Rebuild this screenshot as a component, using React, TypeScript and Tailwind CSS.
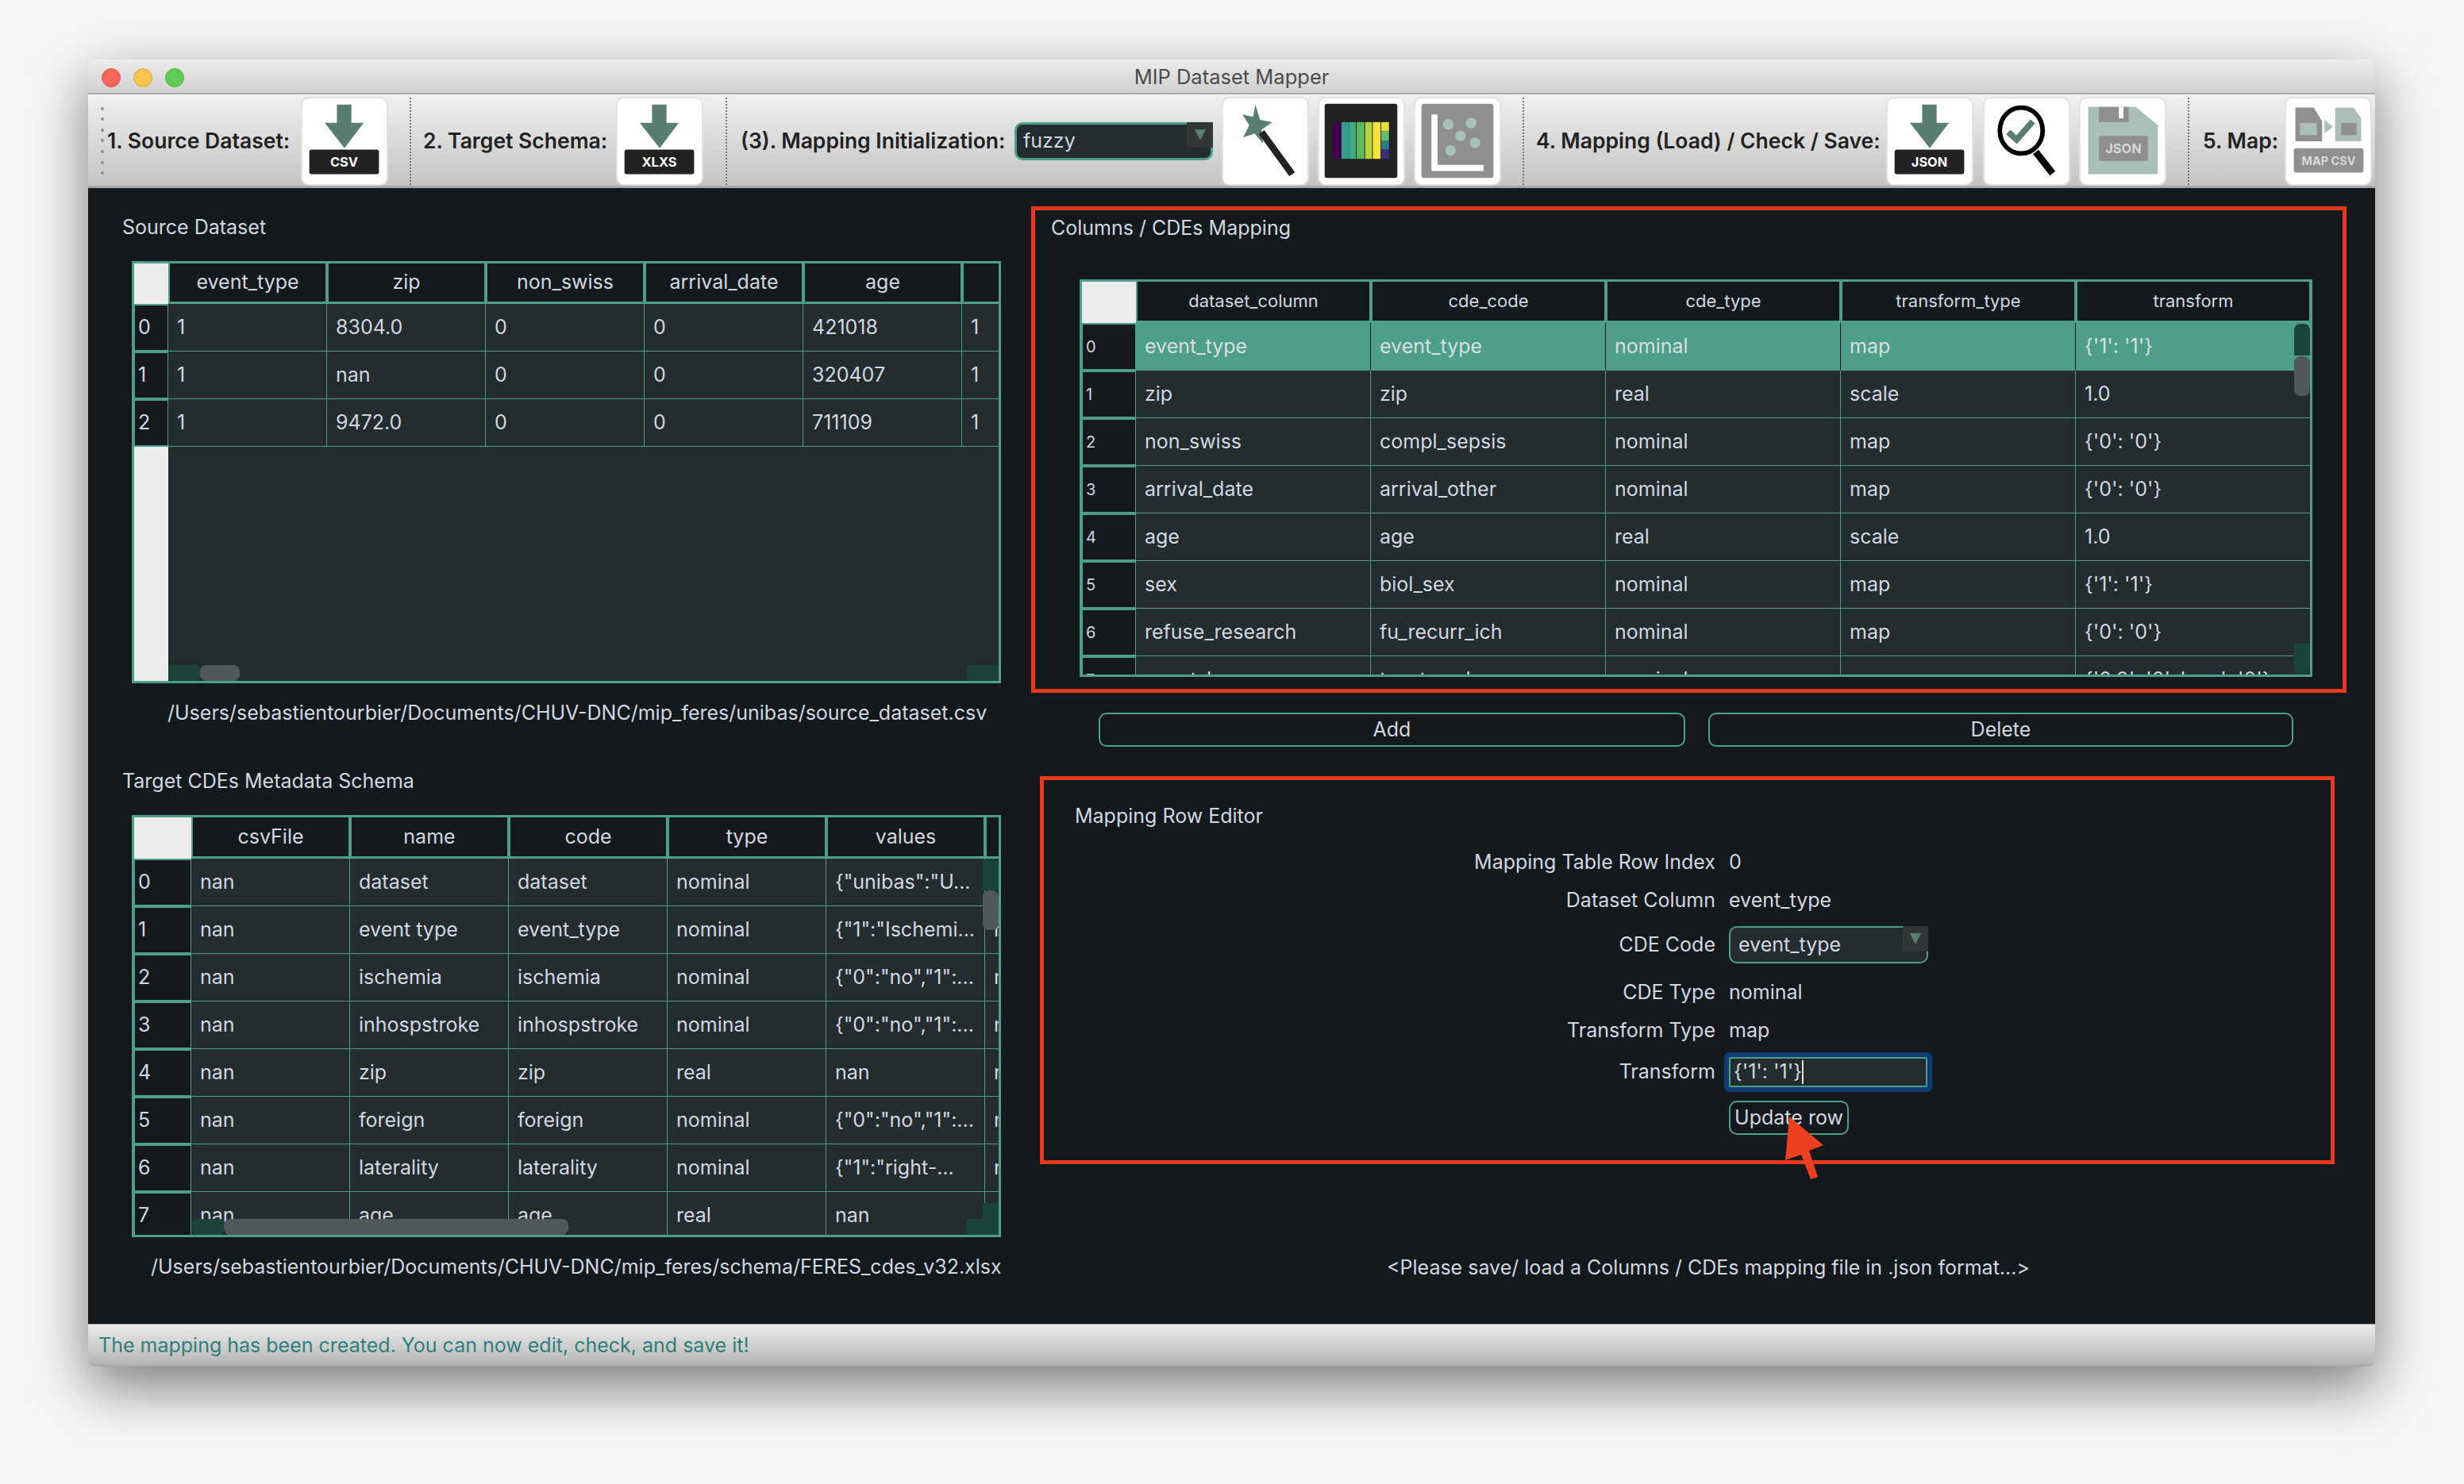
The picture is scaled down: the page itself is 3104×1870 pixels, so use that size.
import React from "react";

function Bar({ className }: { className: string }) {
  return <div className={"absolute " + className} />;
}

type TableProps = {
  width: string;
  height: string;
  headH: string;
  rowHeadW: string;
  cellW: string;
  headFont: string;
  rowHeadFont: string;
  headers: string[];
  rows: string[][];
  selected?: number;
  children?: React.ReactNode;
};

function DataTable({ width, height, headH, rowHeadW, cellW, headFont, rowHeadFont, headers, rows, selected, children }: TableProps) {
  return (
    <div className={`relative flex flex-col shrink-0 overflow-hidden border-[3px] border-[#4e9f89] bg-[#232c2f] ${width} ${height}`}>
      <div className={`flex shrink-0 bg-[#4e9f89] ${headH}`}>
        <div className={`shrink-0 bg-[#ececec] ${rowHeadW}`} />
        {headers.map((h, i) => (
          <div key={i} className={`flex shrink-0 items-center justify-center border-x-2 border-b-[3px] border-[#4e9f89] bg-[#14191d] text-[#d3d7e0] ${cellW} ${headFont}`}>
            {h}
          </div>
        ))}
      </div>
      <div className="flex min-h-0 flex-1">
        <div className={`flex shrink-0 flex-col bg-[#ececec] ${rowHeadW}`}>
          {rows.map((_, i) => (
            <div key={i} className={`flex h-[60px] shrink-0 items-center border-x-[1px] border-y-2 border-[#4e9f89] bg-[#14191d] pl-[4px] text-[#d3d7e0] ${rowHeadFont}`}>
              {i}
            </div>
          ))}
        </div>
        <div className="flex flex-col">
          {rows.map((r, i) => (
            <div key={i} className={`flex h-[60px] shrink-0 ${selected === i ? "bg-[#4e9f89]" : ""}`}>
              {r.map((c, j) => (
                <div
                  key={j}
                  className={`flex shrink-0 items-center overflow-hidden whitespace-nowrap pl-[11px] text-[25px] ${cellW} ${selected === i ? "border-r border-[#14191d] text-[#d7dfdf]" : "border-r border-b border-[#4e9f89] text-[#d3d7e0]"}`}
                >
                  {c}
                </div>
              ))}
            </div>
          ))}
        </div>
      </div>
      {children}
    </div>
  );
}

function Sep() {
  return <div className="h-[110px] w-0 shrink-0 border-l-2 border-dotted border-[#777]" />;
}

function ToolLabel({ children, className }: { children: React.ReactNode; className: string }) {
  return <span className={`shrink-0 whitespace-nowrap text-[26.5px] font-semibold text-[#222] ${className}`}>{children}</span>;
}

function IconBtn({ className, children }: { className: string; children: React.ReactNode }) {
  return (
    <div className={`h-[112px] w-[110px] shrink-0 overflow-hidden rounded-[10px] border-2 border-[#e2e2e2] bg-white ${className}`}>
      <svg viewBox="0 0 110 112" className="h-full w-full">
        {children}
      </svg>
    </div>
  );
}

function DownloadIcon({ label, size }: { label: string; size: number }) {
  return (
    <>
      <path d="M45 8h19v24h16L55 65 29 32h16z" fill="#587e71" />
      <rect x="9" y="67" width="91" height="32" rx="3" fill="#222" />
      <text x="54.5" y="89" textAnchor="middle" fill="#fff" fontSize={size} fontWeight="700" fontFamily="Inter, sans-serif">
        {label}
      </text>
    </>
  );
}

const srcHeaders = ["event_type", "zip", "non_swiss", "arrival_date", "age", ""];
const srcRows = [
  ["1", "8304.0", "0", "0", "421018", "1"],
  ["1", "nan", "0", "0", "320407", "1"],
  ["1", "9472.0", "0", "0", "711109", "1"],
];
const tgtHeaders = ["csvFile", "name", "code", "type", "values", ""];
const tgtRows = [
  ["nan", "dataset", "dataset", "nominal", '{"unibas":"U...', "nan"],
  ["nan", "event type", "event_type", "nominal", '{"1":"Ischemi...', "nan"],
  ["nan", "ischemia", "ischemia", "nominal", '{"0":"no","1":...', "nan"],
  ["nan", "inhospstroke", "inhospstroke", "nominal", '{"0":"no","1":...', "nan"],
  ["nan", "zip", "zip", "real", "nan", "nan"],
  ["nan", "foreign", "foreign", "nominal", '{"0":"no","1":...', "nan"],
  ["nan", "laterality", "laterality", "nominal", '{"1":"right-...', "nan"],
  ["nan", "age", "age", "real", "nan", "nan"],
];
const mapHeaders = ["dataset_column", "cde_code", "cde_type", "transform_type", "transform"];
const mapRows = [
  ["event_type", "event_type", "nominal", "map", "{'1': '1'}"],
  ["zip", "zip", "real", "scale", "1.0"],
  ["non_swiss", "compl_sepsis", "nominal", "map", "{'0': '0'}"],
  ["arrival_date", "arrival_other", "nominal", "map", "{'0': '0'}"],
  ["age", "age", "real", "scale", "1.0"],
  ["sex", "biol_sex", "nominal", "map", "{'1': '1'}"],
  ["refuse_research", "fu_recurr_ich", "nominal", "map", "{'0': '0'}"],
  ["onset_known", "toast_endoc", "nominal", "map", "{'0.0': '0', 'nan': '0'}"],
];

function FormRow({ label, h, mt, children }: { label: string; h: string; mt: string; children: React.ReactNode }) {
  return (
    <div className={`flex items-center ${h} ${mt}`}>
      <div className="w-[846px] shrink-0 text-right text-[25px] text-[#d3d7e0]">{label}</div>
      <div className="ml-[17px] flex items-center text-[25px] text-[#d3d7e0]">{children}</div>
    </div>
  );
}

function ComboArrow({ className }: { className: string }) {
  return (
    <div className={`absolute flex items-center justify-center bg-[#333636] ${className}`}>
      <svg viewBox="0 0 16 16" className="h-[16px] w-[16px]">
        <path d="M1 1h14L8 15z" fill="#587e71" />
      </svg>
    </div>
  );
}

export default function App() {
  return (
    <div className="h-[1870px] w-[3104px] overflow-hidden bg-[#f6f6f6] pl-[111px] pt-[75px] [font-family:Inter,sans-serif]">
      <div className="flex h-[1647px] w-[2881px] flex-col overflow-hidden rounded-t-[12px] rounded-b-[8px] shadow-[0_25px_70px_rgba(0,0,0,0.5)]">
        {/* title bar */}
        <div className="relative flex h-[44px] shrink-0 items-center justify-center border-b-2 border-[#adadad] bg-gradient-to-b from-[#ececec] to-[#d0d0d0] pt-[3px]">
          <div className="absolute left-[17px] top-[11px] flex gap-[16px]">
            <div className="h-[24px] w-[24px] rounded-full border border-[#d9544c] bg-[#f4665c]" />
            <div className="h-[24px] w-[24px] rounded-full border border-[#d9a23a] bg-[#f8c34f]" />
            <div className="h-[24px] w-[24px] rounded-full border border-[#4fae44] bg-[#5fca54]" />
          </div>
          <span className="text-[25.5px] text-[#4a4a4a]">MIP Dataset Mapper</span>
        </div>

        {/* toolbar */}
        <div className="flex h-[118px] shrink-0 items-center border-b-[3px] border-[#a8a8a8] bg-gradient-to-b from-[#f0f0f0] to-[#c4c4c4] pt-[2px]">
          <div className="ml-[16px] flex h-[90px] w-[8px] shrink-0 flex-col justify-between py-[2px]">
            {[0, 1, 2, 3, 4, 5, 6].map((i) => (
              <div key={i} className="h-[4px] w-[4px] rounded-full bg-[#8d8d8d]" />
            ))}
          </div>
          <ToolLabel className="w-[232px]">1. Source Dataset:</ToolLabel>
          <IconBtn className="ml-[12px]">
            <DownloadIcon label="CSV" size={17} />
          </IconBtn>
          <div className="ml-[27px]"><Sep /></div>
          <ToolLabel className="ml-[15px] w-[231px]">2. Target Schema:</ToolLabel>
          <IconBtn className="ml-[12px]">
            <DownloadIcon label="XLXS" size={17} />
          </IconBtn>
          <div className="ml-[28px]"><Sep /></div>
          <ToolLabel className="ml-[17px] w-[333px]">(3). Mapping Initialization:</ToolLabel>
          <div className="relative ml-[12px] flex h-[48px] w-[250px] shrink-0 items-center rounded-[10px] border-[3px] border-[#4e9f89] bg-[#232c2f] pl-[8px] text-[25px] text-[#d3d7e0]">
            fuzzy
            <ComboArrow className="right-[-3px] top-[-3px] h-[32px] w-[33px]" />
          </div>
          <IconBtn className="ml-[11px]">
            <path d="M42 8l6 20 16 3-14 10 2 18-11-13-15 5 8-16-9-14 14 3z" fill="#587e71" />
            <path d="M50 44l40 55" stroke="#222" strokeWidth="9" />
          </IconBtn>
          <IconBtn className="ml-[11px]">
            <rect x="7" y="7" width="95" height="97" rx="3" fill="#222" />
            <rect x="18" y="31" width="10" height="48" fill="#440154" />
            <rect x="29" y="31" width="10" height="48" fill="#35a08b" />
            <rect x="39" y="31" width="9" height="48" fill="#3fa886" />
            <rect x="49" y="31" width="10" height="48" fill="#5cb85c" />
            <rect x="60" y="31" width="9" height="48" fill="#b5d43c" />
            <rect x="70" y="31" width="10" height="48" fill="#f5e23a" />
            <rect x="81" y="31" width="10" height="12" fill="#e8e03a" />
            <rect x="81" y="43" width="10" height="12" fill="#5fbf6a" />
            <rect x="81" y="55" width="10" height="12" fill="#2c7c8e" />
            <rect x="81" y="67" width="10" height="12" fill="#3a2f7f" />
          </IconBtn>
          <IconBtn className="ml-[11px]">
            <rect x="8" y="7" width="94" height="97" rx="3" fill="#8f8f8f" />
            <path d="M21 21h8v66h60v8H21z" fill="#fff" />
            <ellipse cx="43" cy="34" rx="7" ry="7" fill="#a7c0b8" />
            <ellipse cx="73" cy="32" rx="7" ry="7" fill="#a7c0b8" />
            <ellipse cx="59" cy="49" rx="7" ry="7" fill="#a7c0b8" />
            <ellipse cx="78" cy="58" rx="7" ry="7" fill="#a7c0b8" />
            <ellipse cx="46" cy="68" rx="7" ry="7" fill="#a7c0b8" />
          </IconBtn>
          <div className="ml-[27px]"><Sep /></div>
          <ToolLabel className="ml-[15px] w-[428px]">4. Mapping (Load) / Check / Save:</ToolLabel>
          <IconBtn className="ml-[13px]">
            <DownloadIcon label="JSON" size={17} />
          </IconBtn>
          <IconBtn className="ml-[12px]">
            <ellipse cx="48" cy="42" rx="28" ry="30" fill="none" stroke="#000" strokeWidth="6" />
            <path d="M31 44l11 10 21-24" fill="none" stroke="#587e71" strokeWidth="8" />
            <path d="M67 70l22 28" stroke="#000" strokeWidth="9" />
          </IconBtn>
          <IconBtn className="ml-[11px]">
            <path d="M10 11h62l29 24v64H10z" fill="#a9bfb8" />
            <rect x="24" y="11" width="39" height="20" fill="#8f8f8f" />
            <rect x="50" y="11" width="6" height="15" fill="#fff" />
            <rect x="24" y="49" width="64" height="33" rx="3" fill="#8f8f8f" />
            <text x="56" y="72" textAnchor="middle" fill="#d9d9d9" fontSize="17" fontWeight="700" fontFamily="Inter, sans-serif">JSON</text>
          </IconBtn>
          <div className="ml-[27px]"><Sep /></div>
          <ToolLabel className="ml-[17px] w-[93px]">5. Map:</ToolLabel>
          <IconBtn className="ml-[10px]">
            <path d="M12 12h24l11 18v26H12z" fill="#8f8f8f" />
            <rect x="18" y="32" width="22" height="16" fill="#a9bfb8" />
            <path d="M50 28l11 9-11 9z" fill="#a9bfb8" />
            <path d="M64 12h24l10 14v30H64z" fill="#a9bfb8" />
            <rect x="72" y="32" width="20" height="16" fill="#8f8f8f" />
            <rect x="10" y="65" width="91" height="32" rx="3" fill="#8f8f8f" />
            <text x="55.5" y="87" textAnchor="middle" fill="#d9d9d9" fontSize="15" fontWeight="700" fontFamily="Inter, sans-serif">MAP CSV</text>
          </IconBtn>
        </div>

        {/* main */}
        <div className="flex h-[1431px] shrink-0 bg-[#14191d]">
          {/* left column */}
          <div className="flex w-[1188px] shrink-0 flex-col text-[25px] text-[#d3d7e0]">
            <div className="ml-[43px] mt-[30px] flex h-[40px] items-center">Source Dataset</div>
            <div className="ml-[55px] mt-[22px]">
              <DataTable
                width="w-[1095px]"
                height="h-[532px]"
                headH="h-[51px]"
                rowHeadW="w-[43px]"
                cellW="w-[200px]"
                headFont="text-[25px]"
                rowHeadFont="text-[25px]"
                headers={srcHeaders}
                rows={srcRows}
              >
                <Bar className="bottom-0 left-[43px] h-[20px] w-[40px] rounded-[5px] bg-[#1a4439]" />
                <Bar className="bottom-0 left-[83px] h-[20px] w-[50px] rounded-[8px] bg-[#50585b]" />
                <Bar className="bottom-0 right-0 h-[20px] w-[40px] rounded-[5px] bg-[#1a4439]" />
              </DataTable>
            </div>
            <div className="ml-[100px] mt-[18px] flex h-[40px] items-center whitespace-nowrap">
              /Users/sebastientourbier/Documents/CHUV-DNC/mip_feres/unibas/source_dataset.csv
            </div>
            <div className="ml-[43px] mt-[46px] flex h-[40px] items-center">Target CDEs Metadata Schema</div>
            <div className="ml-[55px] mt-[22px]">
              <DataTable
                width="w-[1095px]"
                height="h-[532px]"
                headH="h-[52px]"
                rowHeadW="w-[72px]"
                cellW="w-[200px]"
                headFont="text-[25px]"
                rowHeadFont="text-[25px]"
                headers={tgtHeaders}
                rows={tgtRows}
              >
                <Bar className="right-0 top-[52px] h-[40px] w-[20px] rounded-t-[6px] bg-[#1a4439]" />
                <Bar className="right-0 top-[92px] h-[50px] w-[20px] rounded-[8px] bg-[#50585b]" />
                <Bar className="bottom-0 right-0 h-[40px] w-[20px] bg-[#1a4439]" />
                <Bar className="bottom-0 left-[73px] h-[20px] w-[40px] rounded-[5px] bg-[#1a4439]" />
                <Bar className="bottom-0 left-[113px] h-[20px] w-[434px] rounded-[8px] bg-[#50585b]" />
                <Bar className="bottom-0 right-0 h-[20px] w-[40px] bg-[#1a4439]" />
              </DataTable>
            </div>
            <div className="ml-[79px] mt-[18px] flex h-[40px] w-[1071px] items-center overflow-hidden whitespace-nowrap">
              /Users/sebastientourbier/Documents/CHUV-DNC/mip_feres/schema/FERES_cdes_v32.xlsx
            </div>
          </div>

          {/* right column */}
          <div className="flex w-[1693px] shrink-0 flex-col text-[25px] text-[#d3d7e0]">
            <div className="mt-[23px] flex h-[613px] w-[1657px] flex-col border-[5px] border-[#e8391d]">
              <div className="ml-[20px] mt-[-1px] flex h-[48px] items-center">Columns / CDEs Mapping</div>
              <div className="ml-[56px] mt-[40px]">
                <DataTable
                  width="w-[1553px]"
                  height="h-[501px]"
                  headH="h-[52px]"
                  rowHeadW="w-[68px]"
                  cellW="w-[296px]"
                  headFont="text-[22px]"
                  rowHeadFont="text-[20px]"
                  headers={mapHeaders}
                  rows={mapRows}
                  selected={0}
                >
                  <Bar className="right-0 top-[53px] h-[40px] w-[20px] rounded-t-[8px] bg-[#1a4439]" />
                  <Bar className="right-0 top-[94px] h-[50px] w-[20px] rounded-[8px] bg-[#50585b]" />
                  <Bar className="bottom-0 right-0 h-[39px] w-[20px] rounded-b-[6px] bg-[#1a4439]" />
                </DataTable>
              </div>
            </div>
            <div className="mt-[25px] flex">
              <div className="ml-[85px] flex h-[43px] w-[739px] items-center justify-center rounded-[10px] border-2 border-[#4e9f89]">Add</div>
              <div className="ml-[29px] flex h-[43px] w-[737px] items-center justify-center rounded-[10px] border-2 border-[#4e9f89]">Delete</div>
            </div>
            <div className="ml-[11px] mt-[37px] flex h-[489px] w-[1631px] flex-col border-[5px] border-[#e8391d]">
              <div className="ml-[39px] mt-[26px] flex h-[40px] items-center">Mapping Row Editor</div>
              <FormRow label="Mapping Table Row Index" h="h-[48px]" mt="mt-[14px]">0</FormRow>
              <FormRow label="Dataset Column" h="h-[48px]" mt="mt-0">event_type</FormRow>
              <FormRow label="CDE Code" h="h-[47px]" mt="mt-[8px]">
                <div className="relative flex h-[47px] w-[251px] items-center rounded-[10px] border-2 border-[#4e9f89] bg-[#232c2f] pl-[10px]">
                  event_type
                  <ComboArrow className="right-[-2px] top-[-2px] h-[32px] w-[32px]" />
                </div>
              </FormRow>
              <FormRow label="CDE Type" h="h-[48px]" mt="mt-[13px]">nominal</FormRow>
              <FormRow label="Transform Type" h="h-[48px]" mt="mt-0">map</FormRow>
              <FormRow label="Transform" h="h-[38px]" mt="mt-[9px]">
                <div className="flex h-[38px] w-[250px] items-center rounded-[2px] border-2 border-[#4e9f89] bg-[#232c2f] pl-[4px] shadow-[0_0_0_6px_#123a72]">
                  {"{'1': '1'}"}
                  <span className="h-[30px] w-[2px] bg-[#e8e0dc]" />
                </div>
              </FormRow>
              <FormRow label="" h="h-[43px]" mt="mt-[17px]">
                <div className="relative flex h-[43px] w-[151px] items-center justify-center rounded-[10px] border-2 border-[#4e9f89]">
                  Update row
                  <svg viewBox="0 0 60 90" className="absolute left-[62px] top-[13px] h-[90px] w-[60px]">
                    <path d="M12 5L7 60l20-7 12 31 9-3-11-33 18-7z" fill="#ee3f20" />
                  </svg>
                </div>
              </FormRow>
            </div>
            <div className="mt-[112px] w-[1706px] text-center">&lt;Please save/ load a Columns / CDEs mapping file in .json format...&gt;</div>
          </div>
        </div>

        {/* status bar */}
        <div className="flex h-[54px] shrink-0 items-center border-b-2 border-t border-b-[#aaa] border-t-[#888] bg-gradient-to-b from-[#ececec] to-[#b4b4b4] pl-[13px] pt-[2px] text-[25px] text-[#2f7f7a]">
          The mapping has been created. You can now edit, check, and save it!
        </div>
      </div>
    </div>
  );
}
